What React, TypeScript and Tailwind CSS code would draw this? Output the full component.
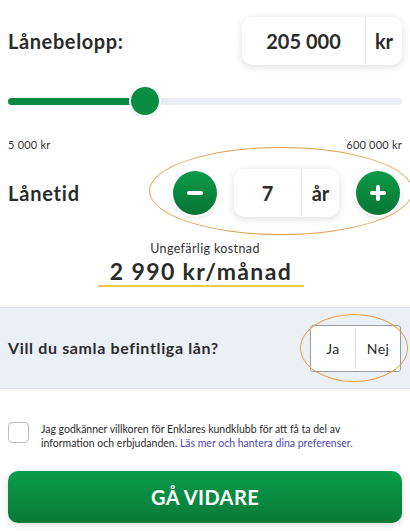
import { useState } from 'react'

const font = { fontFamily: 'Lato, "Noto Sans", sans-serif' }

function RoundButton({ kind }: { kind: 'minus' | 'plus' }) {
  return (
    <button className="w-[44px] h-[44px] rounded-full bg-gradient-to-b from-[#0c9a48] to-[#077536] shadow-[0_2px_6px_rgba(0,0,0,0.18)] ring-2 ring-white flex items-center justify-center">
      <svg width="18" height="18" viewBox="0 0 18 18">
        <path d="M3 9h12" stroke="white" strokeWidth="4" strokeLinecap="round" />
        {kind === 'plus' && <path d="M9 3v12" stroke="white" strokeWidth="4" strokeLinecap="round" />}
      </svg>
    </button>
  )
}

export default function App() {
  const [checked, setChecked] = useState(false)

  return (
    <div className="relative w-[410px] h-[531px] bg-white text-[#2b2b2b] overflow-hidden" style={font}>
      {/* Lånebelopp */}
      <div className="px-2 pt-[17px] flex items-center justify-between">
        <span className="text-[20px] font-bold tracking-[0.03em]">Lånebelopp:</span>
        <div className="w-[160px] h-[48px] rounded-[10px] bg-white shadow-[0_2px_8px_rgba(0,0,0,0.13)] flex items-center">
          <span className="flex-1 text-center text-[20px] font-bold">205 000</span>
          <span className="w-[37px] h-full border-l border-[#eeeeee] flex items-center justify-center text-[20px] font-bold">kr</span>
        </div>
      </div>

      {/* slider */}
      <div className="px-2 mt-[22px]">
        <div className="relative h-[28px] flex items-center">
          <div className="w-full h-[7px] rounded-full bg-[#e9eef4]">
            <div className="w-[137px] h-full rounded-full bg-[#0a8a40]" />
          </div>
          <div className="absolute left-[123px] top-0 w-[28px] h-[28px] rounded-full bg-[#0a8c42] ring-2 ring-white shadow-[0_1px_4px_rgba(0,0,0,0.2)]" />
        </div>
        <div className="mt-[23px] flex justify-between text-[11px] leading-[14px] tracking-[0.02em] text-[#333]">
          <span>5 000 kr</span>
          <span>600 000 kr</span>
        </div>
      </div>

      {/* Lånetid */}
      <div className="px-2 mt-[17px] flex items-center justify-between">
        <span className="text-[20px] font-bold tracking-[0.04em]">Lånetid</span>
        <div className="flex items-center gap-[17px] mr-[2px]">
          <RoundButton kind="minus" />
          <div className="w-[105px] h-[48px] rounded-[10px] bg-white shadow-[0_2px_8px_rgba(0,0,0,0.13)] flex items-center">
            <span className="w-[67px] text-center text-[20px] font-bold">7</span>
            <span className="flex-1 h-full border-l border-[#eeeeee] flex items-center justify-center text-[20px] font-bold">år</span>
          </div>
          <RoundButton kind="plus" />
        </div>
      </div>
      <div className="absolute left-[149px] top-[147px] w-[264px] h-[88px] rounded-[50%] border border-[#e3a04a] pointer-events-none" />

      {/* kostnad */}
      <div className="mt-[24px] flex flex-col items-center">
        <span className="text-[12.5px] leading-[16px] tracking-[0.03em] text-[#333]">Ungefärlig kostnad</span>
        <span className="mr-[8px] px-[12px] text-[23px] leading-[28px] font-bold tracking-[0.06em] border-b-2 border-[#f2c84b]">2 990 kr/månad</span>
      </div>

      {/* samla lån */}
      <div className="mt-[20px] h-[82px] bg-[#ebf0f7] border-y border-[#dfe5ec] px-2 flex items-center justify-between">
        <span className="text-[16px] font-bold tracking-[0.04em]">Vill du samla befintliga lån?</span>
        <div className="mr-[1px] w-[91px] h-[47px] rounded-[3px] bg-white border border-[#9a9a9a] flex">
          <button className="flex-1 text-[14px] tracking-[0.03em]">Ja</button>
          <span className="w-px my-[2px] bg-[#dddddd]" />
          <button className="flex-1 text-[14px] tracking-[0.03em]">Nej</button>
        </div>
      </div>
      <div className="absolute left-[300px] top-[314px] w-[108px] h-[68px] rounded-[50%] border border-[#e3a04a] pointer-events-none" />

      {/* villkor */}
      <div className="px-2 mt-[33px] flex gap-[12px]">
        <button
          onClick={() => setChecked(!checked)}
          className="shrink-0 w-[21px] h-[21px] rounded-[4px] border border-[#bdbdbd] bg-white"
        />
        <p className="text-[10.5px] leading-[14px] text-[#2b2b2b] whitespace-nowrap">
          Jag godkänner villkoren för Enklares kundklubb för att få ta del av
          <br />
          information och erbjudanden.{' '}
          <span className="text-[#4b45b8]">Läs mer och hantera dina preferenser.</span>
        </p>
      </div>

      {/* button */}
      <div className="px-2 mt-[21px]">
        <button className="w-full h-[52px] rounded-[10px] bg-gradient-to-b from-[#0a9c4a] to-[#087a39] shadow-[0_2px_6px_rgba(0,0,0,0.15)] text-white text-[20px] font-bold tracking-[0.02em]">
          GÅ VIDARE
        </button>
      </div>
    </div>
  )
}
